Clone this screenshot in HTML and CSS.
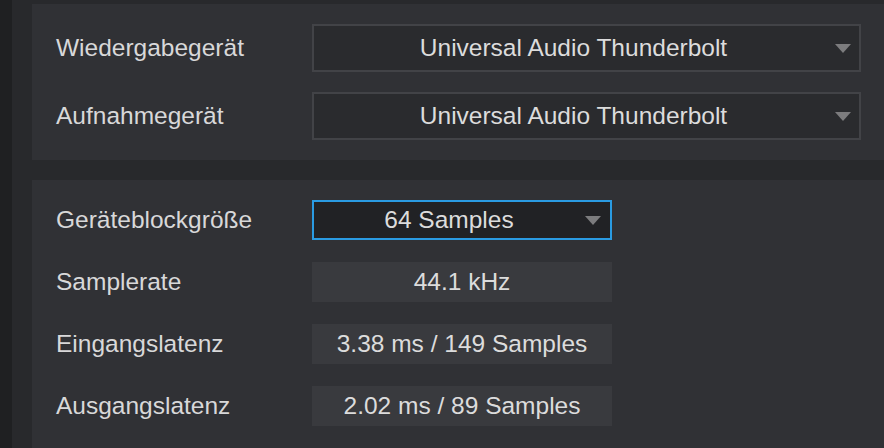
FILE: index.html
```html
<!DOCTYPE html>
<html lang="de">
<head>
<meta charset="utf-8">
<link rel="stylesheet" href="styles.css">
</head>
<body>
<div class="app">
  <div class="rail"></div>
  <div class="main">
    <section class="panel panel-devices">
      <div class="row row-device">
        <span class="label">Wiedergabegerät</span>
        <div class="select">
          <span class="select-text">Universal Audio Thunderbolt</span>
          <span class="arrow"></span>
        </div>
      </div>
      <div class="row row-device">
        <span class="label">Aufnahmegerät</span>
        <div class="select">
          <span class="select-text">Universal Audio Thunderbolt</span>
          <span class="arrow"></span>
        </div>
      </div>
      <div class="scroll-thumb"></div>
    </section>
    <section class="panel panel-settings">
      <div class="row row-setting">
        <span class="label">Geräteblockgröße</span>
        <div class="select select-small select-focus">
          <span class="select-text">64 Samples</span>
          <span class="arrow"></span>
        </div>
      </div>
      <div class="row row-setting">
        <span class="label">Samplerate</span>
        <div class="readout">44.1 kHz</div>
      </div>
      <div class="row row-setting">
        <span class="label">Eingangslatenz</span>
        <div class="readout">3.38 ms / 149 Samples</div>
      </div>
      <div class="row row-setting">
        <span class="label">Ausgangslatenz</span>
        <div class="readout">2.02 ms / 89 Samples</div>
      </div>
    </section>
  </div>
</div>
</body>
</html>
```
FILE: styles.css
```css
html, body {
  margin: 0;
  padding: 0;
  height: 100%;
  background: #28292c;
  overflow: hidden;
}
body {
  font-family: "Liberation Sans", Arial, sans-serif;
  color: #d8d8d9;
}
.app {
  display: flex;
  height: 448px;
}
.rail {
  width: 12px;
  flex: none;
  background: #1f2022;
}
.main {
  flex: 1;
  padding: 4px 0 0 20px;
  display: flex;
  flex-direction: column;
  gap: 20px;
}
.panel {
  background: #303135;
  padding: 20px 21px 20px 24px;
  display: flex;
  flex-direction: column;
  position: relative;
}
.panel-devices {
  height: 156px;
  box-sizing: border-box;
  gap: 20px;
}
.panel-settings {
  flex: 1;
  gap: 22px;
}
.row {
  display: flex;
  align-items: center;
}
.label {
  width: 256px;
  flex: none;
  font-size: 24.5px;
  line-height: 1;
}
.row-device { height: 48px; }
.row-setting { height: 40px; }
.select {
  box-sizing: border-box;
  height: 48px;
  width: 549px;
  border: 2px solid #424347;
  background: #2a2b2e;
  display: flex;
  align-items: center;
  justify-content: center;
  padding-right: 26px;
  position: relative;
  font-size: 24.5px;
  color: #dcdcdc;
}
.arrow {
  position: absolute;
  right: 8px;
  top: 50%;
  margin-top: -4px;
  width: 0;
  height: 0;
  border-left: 8px solid transparent;
  border-right: 8px solid transparent;
  border-top: 9px solid #7c7c7e;
}
.select-small {
  width: 300px;
  height: 40px;
}
.select-focus {
  border-color: #2a9be2;
  background: #212225;
}
.select-small .arrow {
  right: 9px;
  margin-top: -4px;
}
.readout {
  box-sizing: border-box;
  width: 300px;
  height: 40px;
  background: #393a3e;
  display: flex;
  align-items: center;
  justify-content: center;
  font-size: 24.5px;
  color: #dcdcdc;
}
.scroll-thumb {
  position: absolute;
  right: -2px;
  top: 20px;
  width: 2px;
  height: 44px;
  background: #4b4c50;
}
```
